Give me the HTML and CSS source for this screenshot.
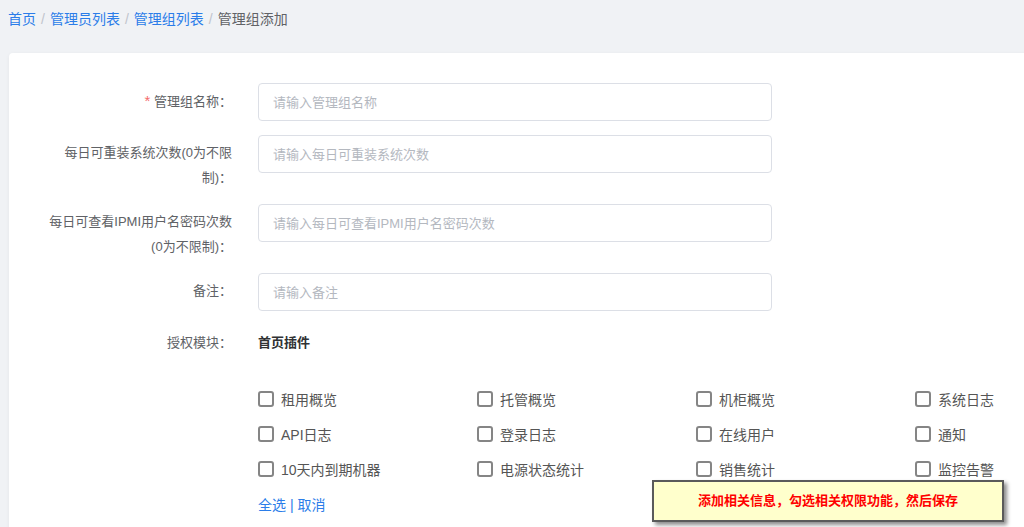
FILE: index.html
```html
<!DOCTYPE html>
<html lang="zh-CN">
<head>
    <meta charset="UTF-8">
    <title>管理组添加</title>
    <link rel="stylesheet" href="styles.css">
</head>
<body>
    <div class="crumb">
        <a href="#">首页</a><span class="sep">/</span><a href="#">管理员列表</a><span class="sep">/</span><a href="#">管理组列表</a><span class="sep">/</span><span class="cur">管理组添加</span>
    </div>
    <div class="card">
        <div class="row">
            <div class="lbl"><i class="req">*</i> 管理组名称：</div>
            <div class="ctl"><input class="ipt" type="text" placeholder="请输入管理组名称"></div>
        </div>
        <div class="row">
            <div class="lbl">每日可重装系统次数(0为不限<br>制)：</div>
            <div class="ctl"><input class="ipt" type="text" placeholder="请输入每日可重装系统次数"></div>
        </div>
        <div class="row">
            <div class="lbl">每日可查看IPMI用户名密码次数<br>(0为不限制)：</div>
            <div class="ctl"><input class="ipt" type="text" placeholder="请输入每日可查看IPMI用户名密码次数"></div>
        </div>
        <div class="row">
            <div class="lbl">备注：</div>
            <div class="ctl"><input class="ipt" type="text" placeholder="请输入备注"></div>
        </div>
        <div class="row">
            <div class="lbl">授权模块：</div>
            <div class="ctl">
                <div class="mod-title">首页插件</div>
                <div class="checks">
                    <label class="chk"><span class="box"></span>租用概览</label>
                    <label class="chk"><span class="box"></span>托管概览</label>
                    <label class="chk"><span class="box"></span>机柜概览</label>
                    <label class="chk"><span class="box"></span>系统日志</label>
                    <label class="chk"><span class="box"></span>API日志</label>
                    <label class="chk"><span class="box"></span>登录日志</label>
                    <label class="chk"><span class="box"></span>在线用户</label>
                    <label class="chk"><span class="box"></span>通知</label>
                    <label class="chk"><span class="box"></span>10天内到期机器</label>
                    <label class="chk"><span class="box"></span>电源状态统计</label>
                    <label class="chk"><span class="box"></span>销售统计</label>
                    <label class="chk"><span class="box"></span>监控告警</label>
                </div>
                <div class="sel"><a href="#">全选</a> | <a href="#">取消</a></div>
            </div>
        </div>
    </div>
    <div class="tip">添加相关信息，勾选相关权限功能，然后保存</div>
</body>
</html>
```

FILE: styles.css
```css
*{
    margin:0;
    padding:0;
    box-sizing:border-box;
}
html,body{
    width:1024px;
    height:527px;
    overflow:hidden;
}
body{
    background-color:#f0f2f5;
    font-family:"Liberation Sans","Noto Sans CJK SC",sans-serif;
    font-size:13px;
    color:#606266;
    position:relative;
}
a{
    text-decoration:none;
    color:#2b7de9;
}
.crumb{
    padding:10px 0 0 8px;
    height:53px;
    font-size:14px;
    line-height:18px;
}
.crumb .sep{
    color:#c0c4cc;
    margin:0 5px;
}
.crumb .cur{
    color:#606266;
}
.card{
    margin-left:9px;
    width:1200px;
    height:520px;
    background-color:#fff;
    border-radius:4px;
    box-shadow:0 1px 4px rgba(0,0,0,0.05);
    padding-top:30px;
}
.row{
    display:flex;
    margin-bottom:14px;
}
.lbl{
    width:249px;
    flex-shrink:0;
    padding:5px 26px 0 0;
    text-align:right;
    line-height:25px;
    font-size:13px;
    color:#606266;
}
.req{
    font-style:normal;
    color:#f56c6c;
    font-size:15px;
}
.ctl{
    flex:1;
}
.ipt{
    display:block;
    width:514px;
    height:38px;
    border:1px solid #dcdfe6;
    border-radius:4px;
    padding:0 14px;
    font-family:inherit;
    font-size:13px;
    color:#606266;
    outline:none;
}
.ipt::placeholder{
    color:#b4b8bf;
}
.mod-title{
    padding-top:5px;
    line-height:25px;
    font-weight:bold;
    color:#303133;
}
.checks{
    display:grid;
    grid-template-columns:repeat(4,219px);
    margin-top:26px;
}
.chk{
    display:flex;
    align-items:center;
    height:35px;
    font-size:14px;
    color:#555;
}
.box{
    width:16px;
    height:16px;
    border:2px solid #858585;
    border-radius:3px;
    margin-right:7px;
}
.sel{
    line-height:38px;
    font-size:14px;
    color:#2b7de9;
}
.tip{
    position:absolute;
    left:652px;
    top:480px;
    width:352px;
    height:42px;
    background-color:#ffffcc;
    border:2px solid #5a5a5a;
    box-shadow:3px 3px 4px rgba(0,0,0,0.45);
    text-align:center;
    line-height:38px;
    font-family:"Liberation Serif","Noto Sans CJK SC",serif;
    font-weight:bold;
    font-size:13px;
    color:#ff0000;
}
```
